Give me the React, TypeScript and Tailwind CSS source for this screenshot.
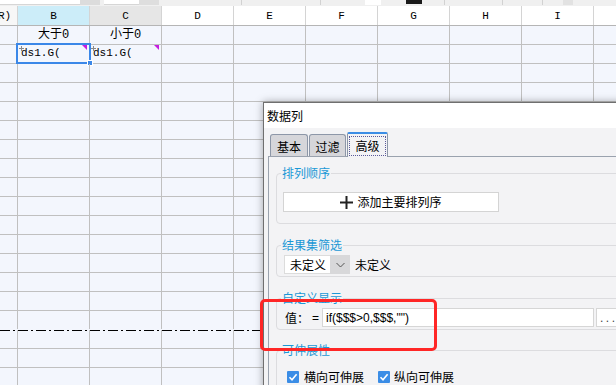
import React from "react";

const COLS = ["B", "C", "D", "E", "F", "G", "H", "I"];

function CheckBox() {
  return (
    <span className="flex h-[12px] w-[12px] shrink-0 items-center justify-center rounded-[1px] bg-[#3b8de6]">
      <svg width="10" height="10" viewBox="0 0 10 10">
        <polyline points="1.5,5.2 4,7.8 8.6,2.2" fill="none" stroke="white" strokeWidth="1.6" />
      </svg>
    </span>
  );
}

function Marks() {
  return (
    <>
      <svg className="absolute left-[1px] top-[1px]" width="5" height="5" viewBox="0 0 5 5">
        <path d="M2.5 0V5M0 2.5H5" stroke="#8a8a8a" strokeWidth="1" />
      </svg>
      <svg className="absolute right-[2px] top-0" width="5" height="5" viewBox="0 0 5 5">
        <polygon points="0,0 5,0 5,5" fill="#c51ee0" />
      </svg>
    </>
  );
}

function GridCell({ r, c }: { r: number; c: string }) {
  let content: React.ReactNode = null;
  if (r === 0 && c === "B") content = <div className="text-center text-[12px] leading-[18px]">大于0</div>;
  if (r === 0 && c === "C") content = <div className="text-center text-[12px] leading-[18px]">小于0</div>;
  if (r === 1 && (c === "B" || c === "C"))
    content = (
      <>
        <Marks />
        <div className="pl-[3px] text-[11px] leading-[17px]">ds1.G(</div>
        {c === "B" && (
          <div className="absolute left-[-2px] top-[-2px] h-[21px] w-[75px] border-2 border-[#3a87e8]">
            <div className="absolute bottom-[-4px] right-[-4px] h-[6px] w-[6px] border border-white bg-[#3a87e8]" />
          </div>
        )}
      </>
    );
  return <div className="relative w-[72px] shrink-0 border-r border-[#c0c0c0]">{content}</div>;
}

export default function App() {
  return (
    <div className="relative h-[385px] w-[616px] overflow-hidden bg-[#f3f6fd] font-['Liberation_Mono','Noto_Sans_CJK_SC',monospace] text-black">
      {/* toolbar remnant */}
      <div className="flex h-[6px] bg-[#f0f0f0]">
        <div className="h-[5px] w-[80px] border-b border-[#d6d6d6] bg-white" />
        <div className="h-[5px] w-[20px] bg-[#dcdcdc]" />
        <div className="ml-[4px] h-[5px] w-[35px] border-b border-[#d6d6d6] bg-white" />
        <div className="h-[5px] w-[20px] bg-[#dedede]" />
        <div className="ml-[82px] h-[5px] w-px bg-[#d2d2d2]" />
        <div className="ml-[78px] h-[5px] w-px bg-[#d2d2d2]" />
        <div className="ml-[44px] h-[5px] w-[16px] bg-white" />
        <div className="ml-[25px] h-[4px] w-[16px] bg-[#1a1a1a]" />
        <div className="ml-[22px] h-[5px] w-px bg-[#d2d2d2]" />
        <div className="ml-[57px] h-[5px] w-px bg-[#d2d2d2]" />
        <div className="ml-[39px] h-[5px] w-px bg-[#d2d2d2]" />
        <div className="ml-[20px] h-[5px] w-[10px] bg-[#e2e2e2]" />
      </div>

      {/* column header */}
      <div className="flex h-[20px] border-b border-[#b5b5b5] bg-white text-[11px] leading-[21px]">
        <div className="w-[18px] shrink-0 overflow-hidden whitespace-nowrap border-r border-[#d4d4d4] bg-[#f7f7f7] pl-0 -indent-[2px]">R)</div>
        {COLS.map((c) => (
          <div
            key={c}
            className={`w-[72px] shrink-0 border-r border-[#d4d4d4] text-center ${
              c === "B" ? "bg-[#ccedf9]" : c === "C" ? "bg-[#e6e6e6]" : ""
            }`}
          >
            {c}
          </div>
        ))}
        <div className="flex-1" />
      </div>

      {/* rows */}
      {Array.from({ length: 19 }).map((_, r) => (
        <div
          key={r}
          className={`flex h-[19px] border-b ${r === 15 ? "border-transparent" : "border-[#c0c0c0]"}`}
        >
          <div className="w-[18px] shrink-0 border-r border-[#c0c0c0]" />
          {COLS.map((c) => (
            <GridCell key={c} r={r} c={c} />
          ))}
          <div className="flex-1" />
        </div>
      ))}

      {/* page break line */}
      <svg className="absolute left-0 top-[330px]" width="263" height="1">
        <line x1="0" y1="0.5" x2="263" y2="0.5" stroke="#000" strokeWidth="1" strokeDasharray="10 3 2 3" />
      </svg>

      {/* dialog */}
      <div className="absolute left-[263px] top-[102px] h-[320px] w-[420px] border border-[#6f6f6f] bg-[#f3f3f5] font-['Noto_Sans_CJK_SC',sans-serif] text-[12px] text-black shadow-[0_0_8px_rgba(0,0,0,0.35)]">
        <div className="h-[25px] bg-white pl-[3px] leading-[25px]">数据列</div>
        <div className="pt-[4px]">
          <div className="flex items-end gap-[1px] pl-[6px]">
            <div className="flex h-[22px] w-[38px] items-center justify-center rounded-t-[3px] border border-b-0 border-[#8d97a8] bg-[#d6d6da] pt-[2px] text-[12px]">
              基本
            </div>
            <div className="flex h-[22px] w-[37px] items-center justify-center rounded-t-[3px] border border-b-0 border-[#8d97a8] bg-[#d6d6da] pt-[2px] text-[12px]">
              过滤
            </div>
            <div className="relative z-10 -mb-[1px] h-[25px] w-[41px] rounded-t-[2px] border-x border-t-2 border-x-[#8d97a8] border-t-[#3b8de5] bg-[#f3f3f5] px-[1px] pt-[2px]">
              <div className="flex h-[20px] items-center justify-center border border-dotted border-[#5a5a9a] text-[12px]">
                高级
              </div>
            </div>
          </div>

          <div className="ml-[4px] flex flex-col border-l border-t border-[#9aa2ae] pl-[7px] pt-[8px]">
            {/* 排列顺序 */}
            <fieldset className="rounded-[4px] border border-[#dcdcdf] pb-[11px]">
              <legend className="ml-[4px] px-[1px] leading-[16px] text-[#1b98d6]">排列顺序</legend>
              <div className="pl-[6px] pt-[11px]">
                <div className="flex h-[20px] w-[216px] items-center justify-center gap-[4px] border border-[#d4d4d4] bg-white">
                  <svg width="13" height="13" viewBox="0 0 13 13">
                    <rect x="5.5" y="0" width="2" height="13" fill="#222" />
                    <rect x="0" y="5.5" width="13" height="2" fill="#222" />
                  </svg>
                  <span className="leading-[18px]">添加主要排列序</span>
                </div>
              </div>
            </fieldset>

            {/* 结果集筛选 */}
            <fieldset className="mt-[13px] rounded-[4px] border border-[#dcdcdf] pb-[2px]">
              <legend className="ml-[4px] px-[1px] leading-[16px] text-[#1b98d6]">结果集筛选</legend>
              <div className="flex items-center pl-[7px] pt-[2px]">
                <div className="flex h-[19px] w-[46px] items-center border border-r-0 border-[#dcdcdc] bg-white pl-[5px] leading-[17px]">
                  未定义
                </div>
                <div className="flex h-[19px] w-[20px] items-center justify-center bg-[#d8d8da]">
                  <svg width="9" height="6" viewBox="0 0 9 6">
                    <polyline points="0.5,1 4.5,5 8.5,1" fill="none" stroke="#555" strokeWidth="1" />
                  </svg>
                </div>
                <span className="ml-[5px] leading-[17px]">未定义</span>
              </div>
            </fieldset>

            {/* 自定义显示 */}
            <fieldset className="mt-[13px] rounded-[4px] border border-[#dcdcdf] pb-[2px]">
              <legend className="ml-[4px] px-[1px] leading-[16px] text-[#1b98d6]">自定义显示</legend>
              <div className="flex items-center pl-[8px] pt-[2px]">
                <span className="w-[24px] leading-[17px]">值：</span>
                <span className="ml-[3px] font-['Liberation_Sans',sans-serif] text-[12px]">=</span>
                <div className="ml-[3px] flex h-[19px] w-[272px] items-center border border-[#d6d6d6] bg-white pl-[3px] font-['Liberation_Sans',sans-serif] text-[12px]">
                  if($$$&gt;0,$$$,"")
                </div>
                <div className="ml-[2px] flex h-[19px] w-[26px] items-center border border-[#d6d6d6] bg-white pl-[3px] font-['Liberation_Sans',sans-serif] text-[12px] tracking-[2.5px] text-[#444]">
                  ...
                </div>
              </div>
            </fieldset>

            {/* 可伸展性 */}
            <fieldset className="mt-[12px] rounded-[4px] border border-[#dcdcdf] pb-[10px]">
              <legend className="ml-[4px] px-[1px] leading-[16px] text-[#1b98d6]">可伸展性</legend>
              <div className="flex h-[16px] items-center pl-[10px] mt-[11px]">
                <CheckBox />
                <span className="ml-[5px] leading-[16px]">横向可伸展</span>
                <span className="ml-[14px]">
                  <CheckBox />
                </span>
                <span className="ml-[4px] leading-[16px]">纵向可伸展</span>
              </div>
            </fieldset>
          </div>
        </div>
      </div>

      {/* red annotation */}
      <div className="absolute left-[260px] top-[299px] z-20 h-[52px] w-[177px] rounded-[5px] border-[3px] border-[#ff2626]" />
    </div>
  );
}
